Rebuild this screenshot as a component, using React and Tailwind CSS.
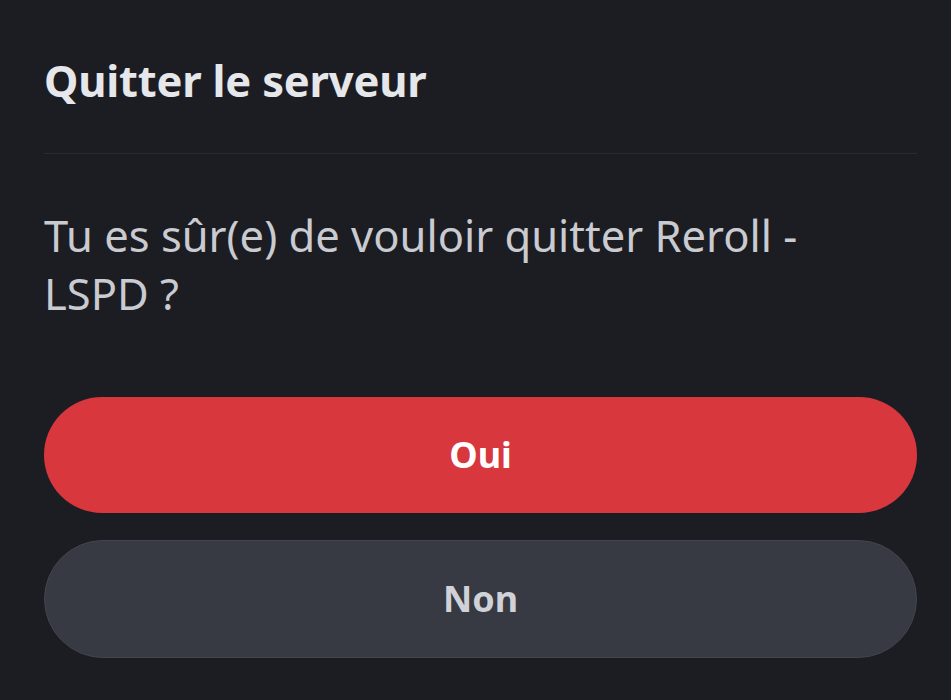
import React from "react";

const App = () => {
  return (
    <div
      className="w-[951px] h-[700px] bg-[#1c1d22] pl-[44px] pr-[34px] pt-[52px] overflow-hidden"
      style={{ fontFamily: '"Noto Sans", "Open Sans", sans-serif' }}
    >
      {/* Header */}
      <h1 className="text-[43.5px] font-bold leading-[56px] text-[#e6e7eb] tracking-[-0.2px]">
        Quitter le serveur
      </h1>
      <div className="mt-[45px] h-px bg-[#2a2b31]" />

      {/* Body */}
      <p className="mt-[52px] text-[43.5px] leading-[58px] text-[#c9cbd1] pr-[60px]">
        Tu es sûr(e) de vouloir quitter Reroll - LSPD ?
      </p>

      {/* Actions */}
      <div className="mt-[75px] flex flex-col gap-[27px]">
        <button className="h-[116px] w-full rounded-full bg-[#d8373e] text-[36px] font-bold text-white">
          Oui
        </button>
        <button className="h-[118px] w-full rounded-full bg-[#383a43] border border-[#43454e] text-[36px] font-bold text-[#d0d2d8]">
          Non
        </button>
      </div>
    </div>
  );
};

export default App;
